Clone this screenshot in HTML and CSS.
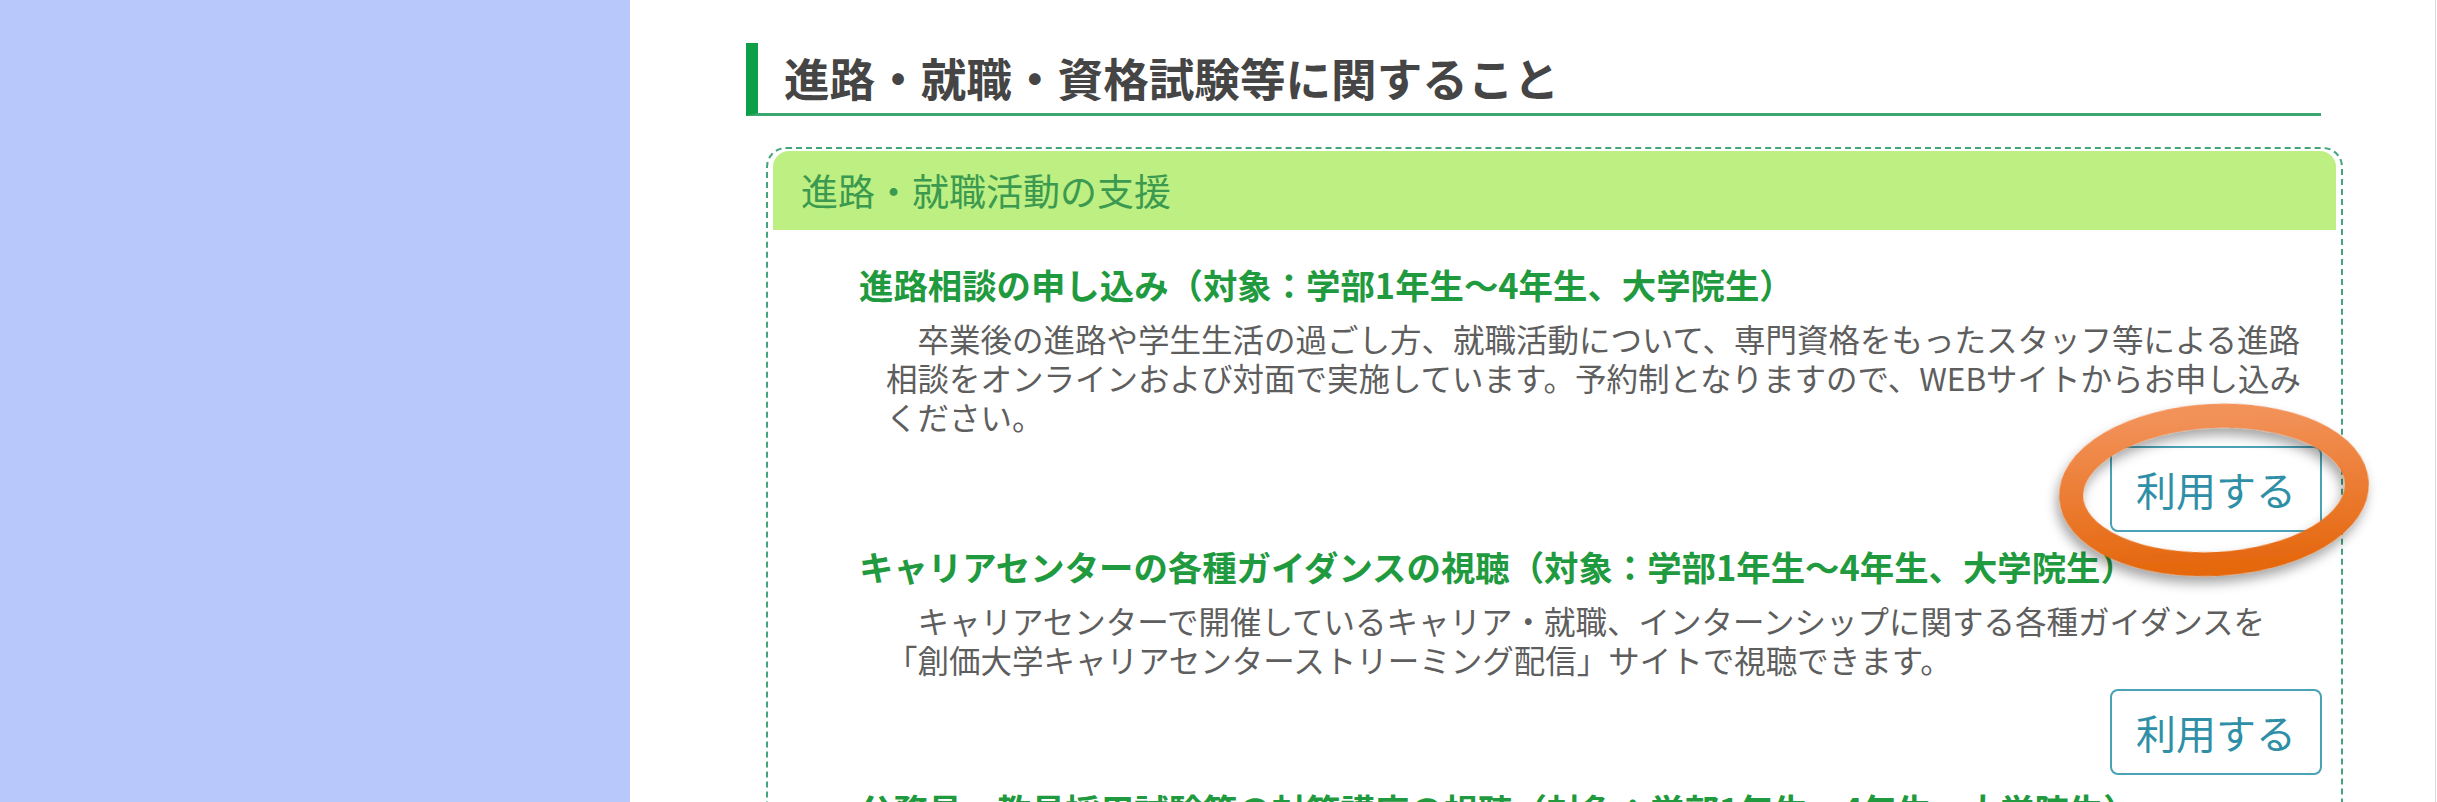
FILE: index.html
```html
<!DOCTYPE html>
<html lang="ja">
<head>
<meta charset="utf-8">
<title>進路・就職・資格試験等に関すること</title>
<link rel="stylesheet" href="styles.css">
</head>
<body>
<div class="page">
  <aside class="sidebar"></aside>
  <main class="main">
    <h2 class="section-title">進路・就職・資格試験等に関すること</h2>
    <section class="box">
      <h3 class="box-head">進路・就職活動の支援</h3>
      <div class="items">
        <div class="item">
          <h4 class="item-title">進路相談の申し込み（対象：学部1年生～4年生、大学院生）</h4>
          <p class="item-text">卒業後の進路や学生生活の過ごし方、就職活動について、専門資格をもったスタッフ等による進路<br>相談をオンラインおよび対面で実施しています。予約制となりますので、WEBサイトからお申し込み<br>ください。</p>
          <div class="item-action"><a class="btn" href="#">利用する</a></div>
        </div>
        <div class="item">
          <h4 class="item-title">キャリアセンターの各種ガイダンスの視聴（対象：学部1年生～4年生、大学院生）</h4>
          <p class="item-text">キャリアセンターで開催しているキャリア・就職、インターンシップに関する各種ガイダンスを<br>「創価大学キャリアセンターストリーミング配信」サイトで視聴できます。</p>
          <div class="item-action"><a class="btn" href="#">利用する</a></div>
        </div>
        <div class="item">
          <h4 class="item-title">公務員・教員採用試験等の対策講座の視聴（対象：学部1年生～4年生、大学院生）</h4>
          <p class="item-text">各種試験対策講座やガイダンスの動画を視聴できます。</p>
        </div>
      </div>
    </section>
    <svg class="highlight" width="360" height="240" viewBox="0 0 360 240" aria-hidden="true">
      <defs>
        <linearGradient id="ring" x1="0" y1="0" x2="0" y2="1">
          <stop offset="0" stop-color="#f29158"/>
          <stop offset="1" stop-color="#e5680f"/>
        </linearGradient>
        <filter id="shadow" x="-20%" y="-20%" width="140%" height="150%">
          <feDropShadow dx="-3" dy="7" stdDeviation="6" flood-color="#000" flood-opacity="0.35"/>
        </filter>
      </defs>
      <ellipse cx="185" cy="112" rx="143" ry="74" fill="none" stroke="url(#ring)" stroke-width="24" transform="rotate(-3 185 112)" filter="url(#shadow)"/>
    </svg>
  </main>
</div>
</body>
</html>
```
FILE: styles.css
```css
html, body {
  margin: 0;
  padding: 0;
  overflow: hidden;
  background: #ffffff;
}

body {
  font-family: "Noto Sans CJK JP", "Noto Sans", sans-serif;
  color: #5e5e5e;
}

.page {
  display: flex;
  min-height: 802px;
  position: relative;
}

.sidebar {
  width: 630px;
  flex: 0 0 630px;
  background: #b9c8fa;
}

.main {
  flex: 1;
  min-width: 0;
  position: relative;
  border-right: 1px solid #d9d9d9;
  margin-right: 1px;
  padding: 43px 92px 0 116px;
}

.section-title {
  margin: 0 22px 0 0;
  height: 70px;
  line-height: 68px;
  padding-left: 26px;
  border-left: 12px solid #0d9f48;
  border-bottom: 3px solid #3aa86e;
  font-size: 45.6px;
  font-weight: 700;
  color: #454545;
}

.box {
  margin: 31px 0 0 20px;
  border: 2px dashed #43a579;
  border-radius: 20px;
  padding: 2px 5px 0 5px;
}

.box-head {
  margin: 0;
  height: 79px;
  line-height: 79px;
  padding-left: 28px;
  background: #bdef82;
  border-radius: 16px 16px 0 0;
  font-size: 37px;
  font-weight: 400;
  color: #3b9a4f;
}

.items {
  padding: 34px 14px 0 86px;
  overflow: hidden;
}

.item {
  margin-bottom: 14px;
}

.item-title {
  margin: 0;
  font-size: 34.4px;
  line-height: 40px;
  font-weight: 700;
  color: #1f9a3e;
  white-space: nowrap;
}

.item-text {
  margin: 15px 0 0 27px;
  font-size: 31.5px;
  line-height: 39px;
  text-indent: 1em;
  color: #5e5e5e;
}

.item-action {
  display: flex;
  justify-content: flex-end;
  margin-top: 10px;
}

.btn {
  display: flex;
  align-items: center;
  justify-content: center;
  width: 208px;
  height: 82px;
  border: 2px solid #4ba2b6;
  border-radius: 8px;
  font-size: 40px;
  color: #2f8fa6;
  text-decoration: none;
  background: #ffffff;
}

.highlight {
  position: absolute;
  left: 1399px;
  top: 378px;
}
```
